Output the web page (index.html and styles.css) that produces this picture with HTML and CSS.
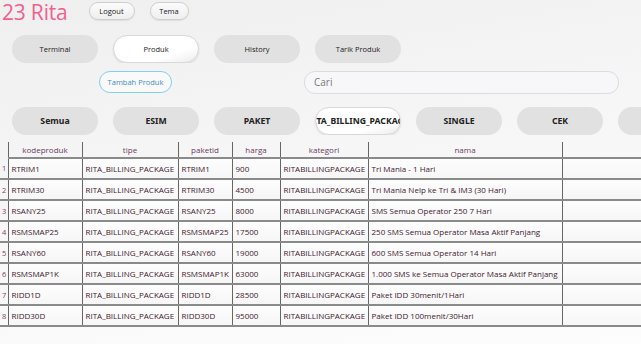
FILE: index.html
```html
<!DOCTYPE html>
<html>
<head>
<meta charset="utf-8">
<link rel="stylesheet" href="styles.css">
</head>
<body>
<div class="page">
  <div class="top">
    <div class="title">23 Rita</div>
    <button class="mini w-logout">Logout</button>
    <button class="mini w-tema">Tema</button>
  </div>
  <div class="tabs">
    <div class="pill">Terminal</div>
    <div class="pill active">Produk</div>
    <div class="pill">History</div>
    <div class="pill">Tarik Produk</div>
  </div>
  <div class="actions">
    <div class="add">Tambah Produk</div>
    <div class="search">Cari</div>
  </div>
  <div class="filters">
    <div class="pill bold">Semua</div>
    <div class="pill bold">ESIM</div>
    <div class="pill bold">PAKET</div>
    <div class="pill bold active">RITA_BILLING_PACKAGE</div>
    <div class="pill bold">SINGLE</div>
    <div class="pill bold">CEK</div>
    <div class="pill bold"></div>
  </div>
  <div class="tablewrap">
  <table class="grid">
    <colgroup>
      <col class="c0"><col class="c1"><col class="c2"><col class="c3"><col class="c4"><col class="c5"><col class="c6"><col class="c7">
    </colgroup>
    <thead>
      <tr><th class="rn"></th><th>kodeproduk</th><th>tipe</th><th>paketid</th><th>harga</th><th>kategori</th><th>nama</th><th></th></tr>
    </thead>
    <tbody>
      <tr><td class="rn">1</td><td>RTRIM1</td><td>RITA_BILLING_PACKAGE</td><td>RTRIM1</td><td>900</td><td>RITABILLINGPACKAGE</td><td>Tri Mania - 1 Hari</td><td></td></tr>
      <tr><td class="rn">2</td><td>RTRIM30</td><td>RITA_BILLING_PACKAGE</td><td>RTRIM30</td><td>4500</td><td>RITABILLINGPACKAGE</td><td>Tri Mania Nelp ke Tri &amp; IM3 (30 Hari)</td><td></td></tr>
      <tr><td class="rn">3</td><td>RSANY25</td><td>RITA_BILLING_PACKAGE</td><td>RSANY25</td><td>8000</td><td>RITABILLINGPACKAGE</td><td>SMS Semua Operator 250 7 Hari</td><td></td></tr>
      <tr><td class="rn">4</td><td>RSMSMAP25</td><td>RITA_BILLING_PACKAGE</td><td>RSMSMAP25</td><td>17500</td><td>RITABILLINGPACKAGE</td><td>250 SMS Semua Operator Masa Aktif Panjang</td><td></td></tr>
      <tr><td class="rn">5</td><td>RSANY60</td><td>RITA_BILLING_PACKAGE</td><td>RSANY60</td><td>19000</td><td>RITABILLINGPACKAGE</td><td>600 SMS Semua Operator 14 Hari</td><td></td></tr>
      <tr><td class="rn">6</td><td>RSMSMAP1K</td><td>RITA_BILLING_PACKAGE</td><td>RSMSMAP1K</td><td>63000</td><td>RITABILLINGPACKAGE</td><td>1.000 SMS ke Semua Operator Masa Aktif Panjang</td><td></td></tr>
      <tr><td class="rn">7</td><td>RIDD1D</td><td>RITA_BILLING_PACKAGE</td><td>RIDD1D</td><td>28500</td><td>RITABILLINGPACKAGE</td><td>Paket IDD 30menit/1Hari</td><td></td></tr>
      <tr><td class="rn">8</td><td>RIDD30D</td><td>RITA_BILLING_PACKAGE</td><td>RIDD30D</td><td>95000</td><td>RITABILLINGPACKAGE</td><td>Paket IDD 100menit/30Hari</td><td></td></tr>
    </tbody>
  </table>
  </div>
</div>
</body>
</html>
```
FILE: styles.css
```css
html, body {
  margin: 0;
  padding: 0;
}
body {
  width: 641px;
  height: 344px;
  overflow: hidden;
  background: linear-gradient(170deg, #efefef 0%, #f6f6f6 45%, #fdfdfd 100%);
  font-family: "Open Sans", "Noto Sans", sans-serif;
  color: #333;
}
.page {
  display: flex;
  flex-direction: column;
  width: 641px;
  overflow: hidden;
}
.top {
  height: 35px;
  display: flex;
  align-items: flex-start;
}
.title {
  font-size: 21px;
  line-height: 24px;
  color: #f2608f;
  margin: 0 21px 0 2px;
  letter-spacing: -0.2px;
  white-space: nowrap;
}
.mini {
  margin-top: 2px;
  height: 18px;
  border: 1px solid #cfcfcf;
  border-radius: 9px;
  background: linear-gradient(#fbfbfb, #efefef);
  font-family: "Open Sans", sans-serif;
  font-size: 7.5px;
  color: #222;
  padding: 0;
  box-shadow: 0 1px 1px rgba(0,0,0,0.08);
}
.w-logout { width: 46px; margin-right: 15px; }
.w-tema { width: 39px; }
.tabs, .filters {
  display: flex;
  gap: 15px;
  padding-left: 12px;
  height: 28px;
  overflow: hidden;
}
.pill {
  flex: 0 0 86px;
  height: 28px;
  border-radius: 14px;
  background: #e1e1e1;
  display: flex;
  align-items: center;
  justify-content: center;
  font-size: 7.5px;
  color: #222;
  white-space: nowrap;
  overflow: hidden;
  box-sizing: border-box;
}
.pill.active {
  background: linear-gradient(160deg, #ffffff 70%, #ececec 100%);
  border: 1px solid #d8d8d8;
  box-shadow: 0 1px 2px rgba(0,0,0,0.12);
}
.bold {
  font-family: "Noto Sans", sans-serif;
  font-weight: 700;
  font-size: 8.7px;
  color: #222;
}
.actions {
  margin-top: 8px;
  height: 22px;
  display: flex;
  align-items: center;
  padding-left: 99px;
}
.add {
  width: 73px;
  height: 22px;
  box-sizing: border-box;
  border: 1.5px solid #7fd0ee;
  border-radius: 11px;
  display: flex;
  align-items: center;
  justify-content: center;
  font-size: 7.5px;
  color: #3f8fbf;
  background: rgba(255,255,255,0.5);
}
.search {
  margin-left: 132px;
  width: 315px;
  height: 23px;
  box-sizing: border-box;
  border: 1px solid #dcdce0;
  border-radius: 11px;
  background: #f7f7fa;
  display: flex;
  align-items: center;
  padding-left: 9px;
  font-size: 10px;
  color: #777;
}
.filters {
  margin-top: 14px;
}
.tablewrap {
  margin-top: 7px;
  width: 641px;
  overflow: hidden;
}
.grid {
  border-collapse: collapse;
  table-layout: fixed;
  width: 641px;
  font-family: "Open Sans", sans-serif;
  font-size: 8px;
}
.c0 { width: 8px; }
.c1 { width: 74px; }
.c2 { width: 96px; }
.c3 { width: 54px; }
.c4 { width: 48px; }
.c5 { width: 88px; }
.c6 { width: 194px; }
.c7 { width: 79px; }
.grid th {
  height: 15px;
  padding: 0;
  font-weight: 400;
  color: #6b3a62;
  text-align: center;
  border-left: 1px solid #666;
  border-bottom: 2px solid #8a8a8a;
  white-space: nowrap;
  overflow: hidden;
}
.grid th.rn {
  border-left: none;
  border-bottom: none;
}
.grid td {
  height: 19px;
  padding: 0 0 0 3px;
  color: #40202f;
  border-left: 1px solid #666;
  border-bottom: 2px solid #8a8a8a;
  background: linear-gradient(#fdfdfd, #f6f6f6);
  white-space: nowrap;
  overflow: hidden;
}
.grid td.rn {
  border-left: none;
  padding: 0 0 0 2px;
  color: #8a3a60;
  background: transparent;
  font-size: 7.5px;
}
```
